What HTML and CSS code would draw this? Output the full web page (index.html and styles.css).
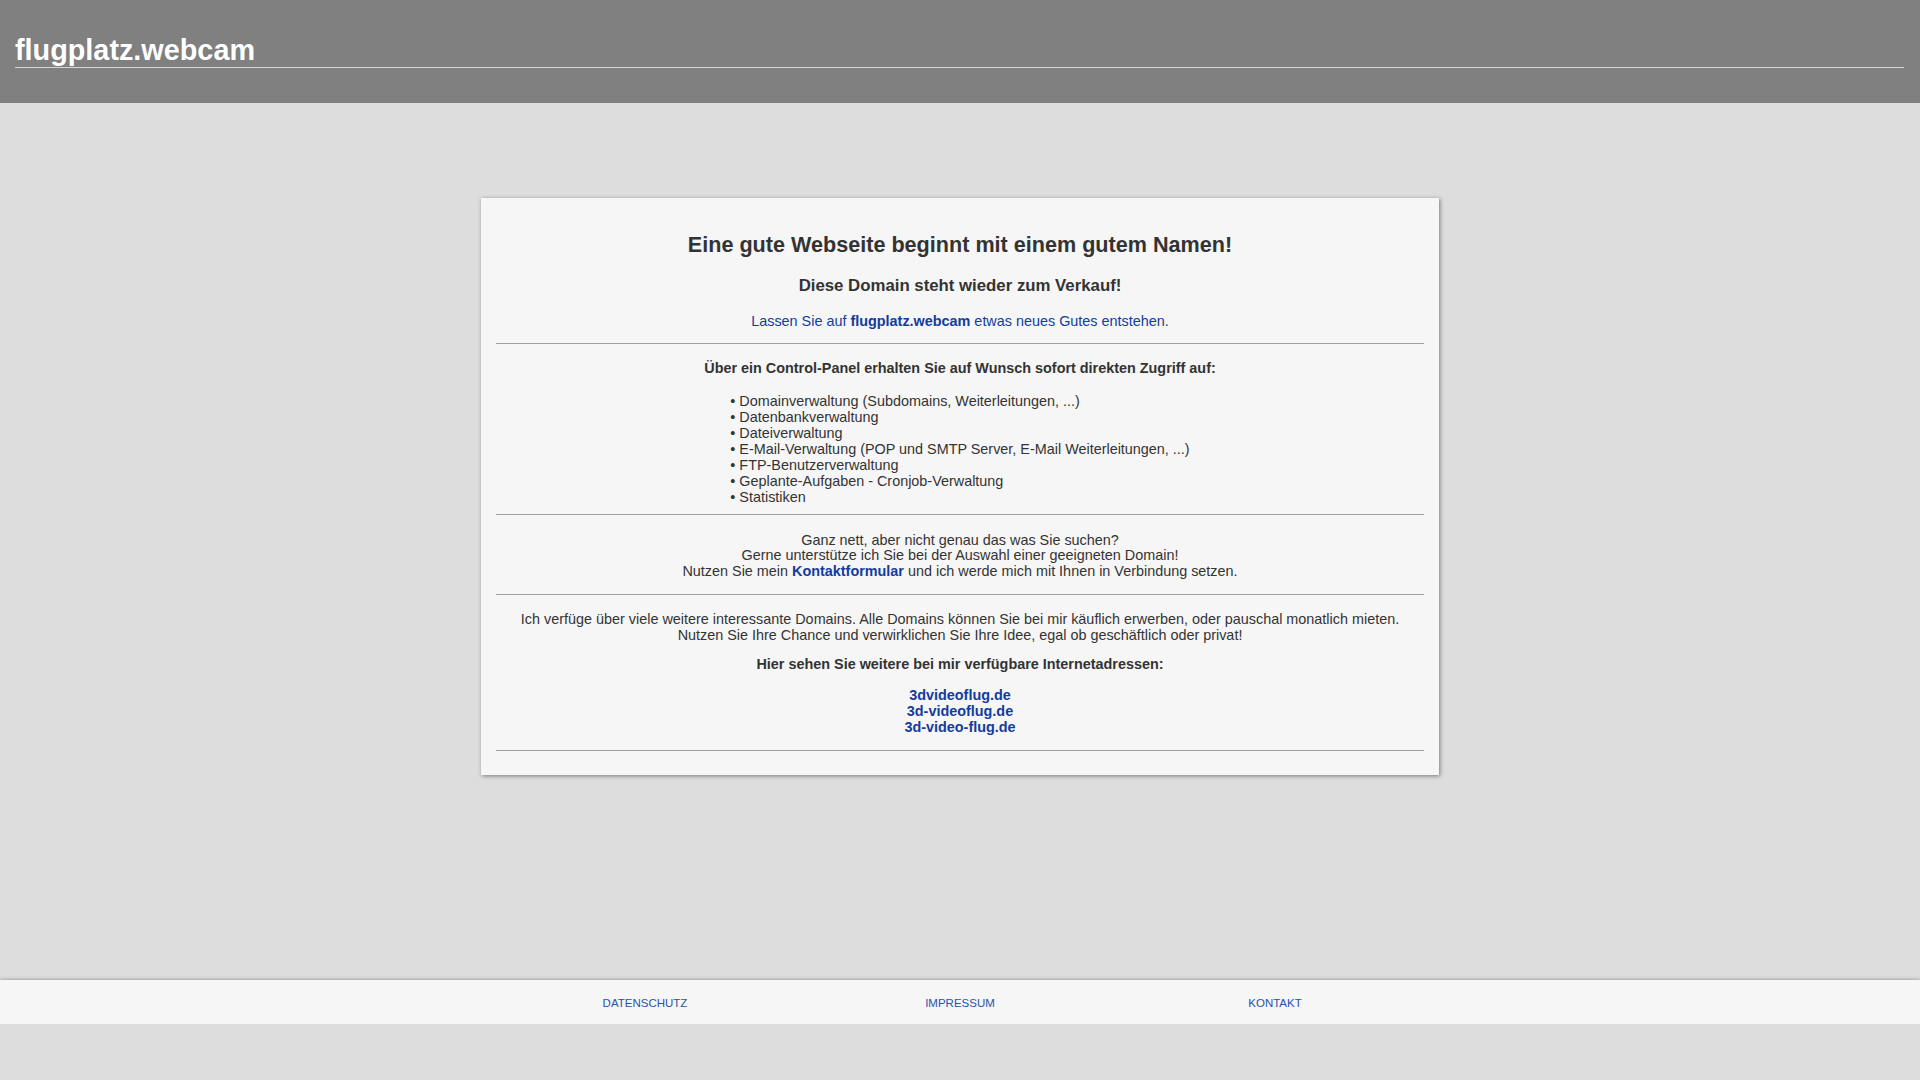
FILE: index.html
```html
<!DOCTYPE html>
<html lang="de">
<head>
<meta charset="utf-8">
<title>flugplatz.webcam</title>
<link rel="stylesheet" href="styles.css">
</head>
<body>
<header class="site-header">
  <h1 class="site-title">flugplatz.webcam</h1>
</header>

<main class="card">
  <h2 class="card-title">Eine gute Webseite beginnt mit einem gutem Namen!</h2>
  <h3 class="card-subtitle">Diese Domain steht wieder zum Verkauf!</h3>
  <p class="lead">Lassen Sie auf <strong>flugplatz.webcam</strong> etwas neues Gutes entstehen.</p>
  <hr class="rule">
  <p class="strong-line">Über ein Control-Panel erhalten Sie auf Wunsch sofort direkten Zugriff auf:</p>
  <div class="list-wrap">
    <ul class="features">
      <li>• Domainverwaltung (Subdomains, Weiterleitungen, ...)</li>
      <li>• Datenbankverwaltung</li>
      <li>• Dateiverwaltung</li>
      <li>• E-Mail-Verwaltung (POP und SMTP Server, E-Mail Weiterleitungen, ...)</li>
      <li>• FTP-Benutzerverwaltung</li>
      <li>• Geplante-Aufgaben - Cronjob-Verwaltung</li>
      <li>• Statistiken</li>
    </ul>
  </div>
  <hr class="rule rule-after-list">
  <p class="text-block contact-block">Ganz nett, aber nicht genau das was Sie suchen?<br>
  Gerne unterstütze ich Sie bei der Auswahl einer geeigneten Domain!<br>
  Nutzen Sie mein <a class="inline-link" href="#">Kontaktformular</a> und ich werde mich mit Ihnen in Verbindung setzen.</p>
  <hr class="rule rule-after-contact">
  <p class="text-block offer-block">Ich verfüge über viele weitere interessante Domains. Alle Domains können Sie bei mir käuflich erwerben, oder pauschal monatlich mieten.<br>
  Nutzen Sie Ihre Chance und verwirklichen Sie Ihre Idee, egal ob geschäftlich oder privat!</p>
  <p class="strong-line more-title">Hier sehen Sie weitere bei mir verfügbare Internetadressen:</p>
  <div class="domains">
    <a class="domain-link" href="#">3dvideoflug.de</a>
    <a class="domain-link" href="#">3d-videoflug.de</a>
    <a class="domain-link" href="#">3d-video-flug.de</a>
  </div>
  <hr class="rule rule-last">
</main>

<footer class="site-footer">
  <nav class="footer-nav">
    <a class="footer-link" href="#">DATENSCHUTZ</a>
    <a class="footer-link" href="#">IMPRESSUM</a>
    <a class="footer-link" href="#">KONTAKT</a>
  </nav>
</footer>
</body>
</html>
```

FILE: styles.css
```css
html, body {
  margin: 0;
  padding: 0;
}

body {
  background: #dddddd;
  font-family: "Liberation Sans", Arial, sans-serif;
  font-size: 14.4px;
  line-height: 16px;
  color: #333333;
}

.site-header {
  background: #808080;
  height: 103px;
  padding-top: 1px;
  box-sizing: border-box;
}

.site-title {
  margin: 0 16px 0 15px;
  padding-top: 32.5px;
  font-size: 28.8px;
  line-height: 33px;
  font-weight: bold;
  color: #ffffff;
  border-bottom: 1px solid #d6d6d6;
}

.card {
  display: block;
  width: 958px;
  box-sizing: border-box;
  margin: 95px auto 0;
  padding: 33.7px 15px 23.6px 15px;
  background: #f6f6f6;
  box-shadow: 1px 1px 4px rgba(0, 0, 0, 0.45);
  text-align: center;
}

.card-title {
  margin: 0;
  font-size: 21.6px;
  line-height: 25px;
  font-weight: bold;
  color: #333333;
}

.card-subtitle {
  margin: 19.8px 0 0;
  font-size: 16.8px;
  line-height: 20px;
  font-weight: bold;
  color: #333333;
}

.lead {
  margin: 16.5px 0 0;
  color: #123c9f;
}

.lead strong {
  font-weight: bold;
}

.rule {
  border: 0;
  height: 1px;
  background: #a0a0a0;
  margin: 14.3px 0 0;
}

.strong-line {
  margin: 15.4px 0 0;
  font-weight: bold;
}

.list-wrap {
  margin-top: 17.3px;
}

.features {
  display: inline-block;
  margin: 0;
  padding: 0;
  list-style: none;
  text-align: left;
}

.rule-after-list {
  margin-top: 9.3px;
}

.text-block {
  margin: 0;
}

.contact-block {
  margin-top: 17.4px;
  line-height: 15.6px;
}

.rule-after-contact {
  margin-top: 14.6px;
}

.offer-block {
  margin-top: 15.6px;
}

.inline-link,
.domain-link {
  color: #123c9f;
  font-weight: bold;
  text-decoration: none;
}

.more-title {
  margin-top: 13.7px;
}

.domains {
  margin-top: 14.5px;
  display: flex;
  flex-direction: column;
  align-items: center;
}

.rule-last {
  margin-top: 15.1px;
}

.site-footer {
  margin-top: 205.8px;
  height: 44px;
  background: #f6f6f6;
  box-shadow: 0 0 4px rgba(0, 0, 0, 0.4);
}

.footer-nav {
  width: 945px;
  height: 100%;
  margin: 0 auto;
  padding-top: 2px;
  box-sizing: border-box;
  display: grid;
  grid-template-columns: repeat(3, 1fr);
  align-items: center;
  justify-items: center;
}

.footer-link {
  font-size: 11.5px;
  color: #2a52a8;
  text-decoration: none;
}
```
